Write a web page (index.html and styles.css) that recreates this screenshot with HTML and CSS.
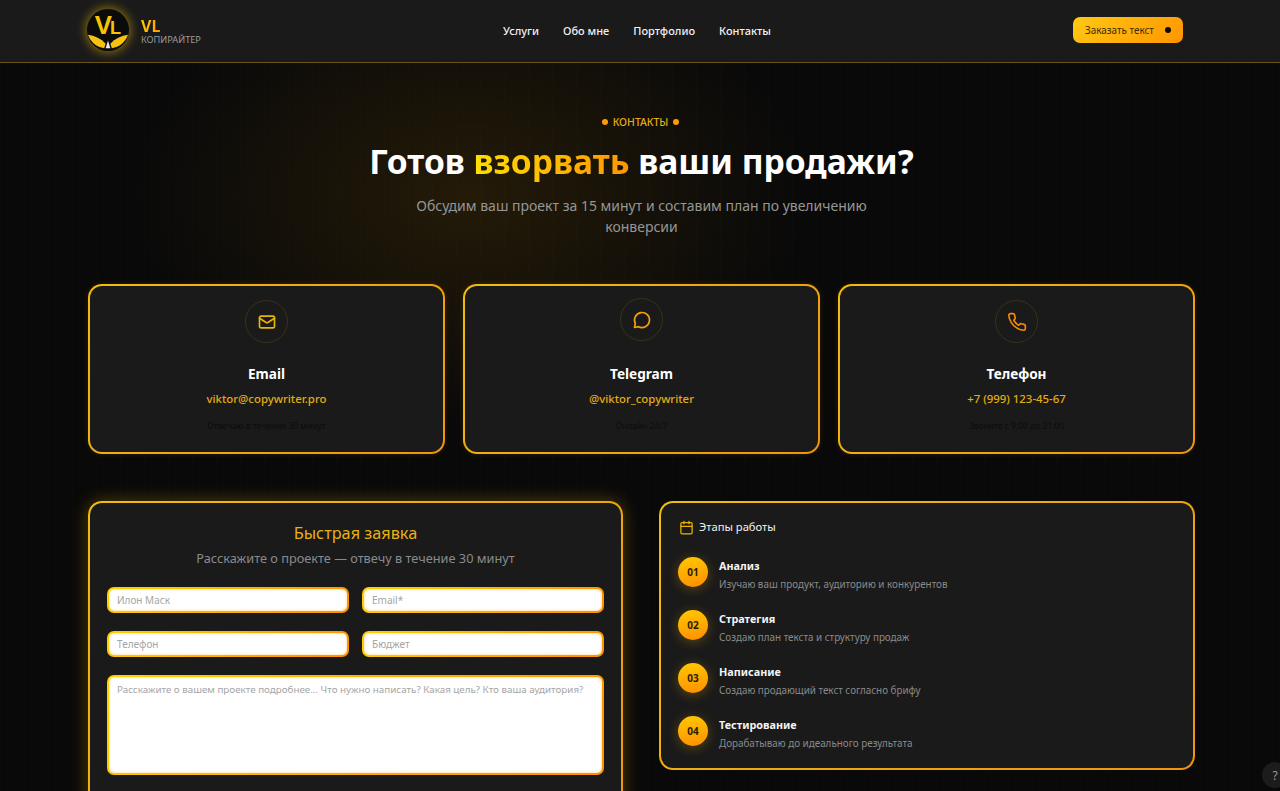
FILE: index.html
```html
<!DOCTYPE html>
<html lang="ru">
<head>
    <meta charset="UTF-8">
    <meta name="viewport" content="width=device-width, initial-scale=1.0">
    <title>VL Копирайтер - Контакты</title>
    <link rel="stylesheet" href="styles.css">
</head>
<body>
    <header class="header">
        <a class="logo" href="#">
            <svg class="logo-mark" viewBox="0 0 44 44" width="42" height="42">
                <circle cx="22" cy="22" r="22" fill="#0b0b0b"/>
                <text class="logo-letters" x="21" y="26" text-anchor="middle">V<tspan class="logo-l">L</tspan></text>
                <path d="M1 27C8 28 15 31 19.5 36.500L18 41C10 40 4 35 1 27z" fill="#f5c211"/>
                <path d="M43 27C36 28 29 31 24.500 36.500L26 41C34 40 40 35 43 27z" fill="#f5c211"/>
                <path d="M22 33l2.500 8h-5z" fill="#e8e8e8"/>
            </svg>
            <span class="logo-text">
                <span class="logo-name">VL</span>
                <span class="logo-role">КОПИРАЙТЕР</span>
            </span>
        </a>
        <nav class="nav">
            <a href="#">Услуги</a>
            <a href="#">Обо мне</a>
            <a href="#">Портфолио</a>
            <a href="#">Контакты</a>
        </nav>
        <a class="order-btn" href="#">Заказать текст <span class="order-dot"></span></a>
    </header>

    <main class="main">
        <section class="hero">
            <div class="hero-label"><span class="dot"></span>КОНТАКТЫ<span class="dot"></span></div>
            <h1>Готов <span class="accent">взорвать</span> ваши продажи?</h1>
            <p>Обсудим ваш проект за 15 минут и составим план по увеличению конверсии</p>
        </section>

        <section class="contact-grid">
            <div class="contact-card">
                <div class="contact-icon">
                    <svg viewBox="0 0 24 24" width="20" height="20" fill="none" stroke="#eab308" stroke-width="2" stroke-linecap="round" stroke-linejoin="round">
                        <rect x="3" y="5" width="18" height="14" rx="2"/>
                        <path d="M21 7.5l-7.970 5.070a2 2 0 0 1-2.060 0L3 7.500"/>
                    </svg>
                </div>
                <h3>Email</h3>
                <a href="#">viktor@copywriter.pro</a>
                <small>Отвечаю в течение 30 минут</small>
            </div>
            <div class="contact-card">
                <div class="contact-icon contact-icon-raised">
                    <svg viewBox="0 0 24 24" width="20" height="20" fill="none" stroke="#f59e0b" stroke-width="2" stroke-linecap="round" stroke-linejoin="round">
                        <path d="M7.900 20A9 9 0 1 0 4 16.100L3 21z"/>
                    </svg>
                </div>
                <h3>Telegram</h3>
                <a href="#">@viktor_copywriter</a>
                <small>Онлайн 24/7</small>
            </div>
            <div class="contact-card">
                <div class="contact-icon">
                    <svg viewBox="0 0 24 24" width="20" height="20" fill="none" stroke="#f08a0c" stroke-width="2" stroke-linecap="round" stroke-linejoin="round">
                        <path d="M22 16.900v3a2 2 0 0 1-2.200 2 19.800 19.800 0 0 1-8.600-3.100 19.500 19.500 0 0 1-6-6A19.800 19.800 0 0 1 2.100 4.200 2 2 0 0 1 4.100 2h3a2 2 0 0 1 2 1.700c.1 1 .4 1.900.7 2.800a2 2 0 0 1-.5 2.100L8.100 9.900a16 16 0 0 0 6 6l1.300-1.300a2 2 0 0 1 2.100-.4c.9.3 1.800.6 2.800.7a2 2 0 0 1 1.700 2z"/>
                    </svg>
                </div>
                <h3>Телефон</h3>
                <a href="#">+7 (999) 123-45-67</a>
                <small>Звоните с 9:00 до 21:00</small>
            </div>
        </section>

        <section class="lower-grid">
            <form class="request-card">
                <h2>Быстрая заявка</h2>
                <p>Расскажите о проекте — отвечу в течение 30 минут</p>
                <div class="form-grid">
                    <input type="text" placeholder="Илон Маск">
                    <input type="email" placeholder="Email*">
                    <input type="tel" placeholder="Телефон">
                    <input type="text" placeholder="Бюджет">
                    <textarea placeholder="Расскажите о вашем проекте подробнее... Что нужно написать? Какая цель? Кто ваша аудитория?"></textarea>
                </div>
            </form>

            <div class="steps-card">
                <h4>
                    <svg viewBox="0 0 24 24" width="15" height="15" fill="none" stroke="#eab308" stroke-width="2" stroke-linecap="round" stroke-linejoin="round">
                        <path d="M8 2v4M16 2v4"/>
                        <rect x="3" y="4" width="18" height="18" rx="2"/>
                        <path d="M3 10h18"/>
                    </svg>
                    Этапы работы
                </h4>
                <ul class="steps">
                    <li>
                        <span class="step-num">01</span>
                        <div class="step-body"><strong>Анализ</strong><span>Изучаю ваш продукт, аудиторию и конкурентов</span></div>
                    </li>
                    <li>
                        <span class="step-num">02</span>
                        <div class="step-body"><strong>Стратегия</strong><span>Создаю план текста и структуру продаж</span></div>
                    </li>
                    <li>
                        <span class="step-num">03</span>
                        <div class="step-body"><strong>Написание</strong><span>Создаю продающий текст согласно брифу</span></div>
                    </li>
                    <li>
                        <span class="step-num">04</span>
                        <div class="step-body"><strong>Тестирование</strong><span>Дорабатываю до идеального результата</span></div>
                    </li>
                </ul>
            </div>
        </section>
    </main>

    <button class="help-btn">?</button>
</body>
</html>
```

FILE: styles.css
```css
* {
    box-sizing: border-box;
}

html, body {
    height: 791px;
    overflow: hidden;
}

body {
    margin: 0;
    color: #fff;
    font-family: "Noto Sans", "Open Sans", sans-serif;
    background-color: #090909;
    background-image:
        radial-gradient(ellipse 340px 230px at 470px 195px, rgba(255, 170, 0, 0.11), transparent),
        repeating-linear-gradient(90deg, rgba(255, 200, 60, 0.012) 0 1px, transparent 1px 24px);
}

a {
    color: inherit;
    text-decoration: none;
}

.header {
    display: flex;
    align-items: center;
    justify-content: space-between;
    height: 63px;
    padding: 0 97px 2px 87px;
    background: #1a1a1a;
    border-bottom: 1px solid #6a5518;
}

.logo {
    display: flex;
    align-items: center;
    gap: 12px;
}

.logo-mark {
    border-radius: 50%;
    box-shadow: 0 0 10px 2px rgba(255, 200, 0, 0.45);
}

.logo-letters {
    font-family: "Liberation Sans", sans-serif;
    font-size: 27px;
    font-weight: 700;
    letter-spacing: -2px;
    fill: #f7c600;
}

.logo-l {
    font-size: 19px;
}

.logo-text {
    display: flex;
    flex-direction: column;
    padding-top: 4px;
}

.logo-name {
    font-size: 16px;
    font-weight: 700;
    line-height: 16px;
    background: linear-gradient(90deg, #ffd000, #ff9800);
    background-clip: text;
    -webkit-background-clip: text;
    color: transparent;
    width: fit-content;
}

.logo-role {
    font-size: 9.2px;
    line-height: 12px;
    color: #9a9a9a;
}

.nav {
    display: flex;
    gap: 24px;
    font-size: 11px;
    font-weight: 500;
    color: #f2f2f2;
}

.order-btn {
    display: flex;
    align-items: center;
    justify-content: space-between;
    width: 110px;
    height: 26px;
    padding: 0 12px;
    border-radius: 7px;
    font-size: 9.9px;
    color: #3b2b05;
    background: linear-gradient(135deg, #ffc914, #ff9500);
}

.order-dot {
    width: 6px;
    height: 6px;
    border-radius: 50%;
    background: #0a0a0a;
}

.main {
    padding: 0 85px 0 88px;
}

.hero {
    text-align: center;
    padding-top: 52px;
}

.hero-label {
    display: flex;
    align-items: center;
    justify-content: center;
    gap: 5px;
    padding-right: 2px;
    font-size: 10.4px;
    line-height: 14px;
    font-weight: 500;
    color: #e5ac12;
}

.dot {
    width: 6px;
    height: 6px;
    border-radius: 50%;
    background: #ff9d00;
}

.hero h1 {
    margin: 9px 0 0;
    font-size: 33.6px;
    line-height: 46px;
    font-weight: 700;
}

.accent {
    background: linear-gradient(90deg, #ffdf00, #ff9500);
    background-clip: text;
    -webkit-background-clip: text;
    color: transparent;
}

.hero p {
    width: 500px;
    margin: 11px auto 0;
    font-size: 14px;
    line-height: 21px;
    color: #969696;
}

.contact-grid {
    display: grid;
    grid-template-columns: repeat(3, 1fr);
    gap: 18px;
    margin-top: 47px;
}

.contact-card,
.request-card,
.steps-card {
    border: 2px solid transparent;
    border-radius: 14px;
    background:
        linear-gradient(#1a1a1a, #1a1a1a) padding-box,
        linear-gradient(135deg, #f0bd10, #ef950a) border-box;
}

.contact-card {
    display: flex;
    flex-direction: column;
    align-items: center;
    height: 170px;
    padding-top: 14px;
    box-shadow: 0 0 6px rgba(255, 170, 0, 0.12);
}

.contact-icon {
    display: flex;
    align-items: center;
    justify-content: center;
    width: 43px;
    height: 43px;
    border: 1px solid #3b3115;
    border-radius: 50%;
}

.contact-icon-raised {
    transform: translateY(-2px);
}

.contact-card h3 {
    margin: 19px 0 0;
    font-size: 13.6px;
    line-height: 24px;
    font-weight: 700;
}

.contact-card a {
    margin-top: 3px;
    font-size: 11.4px;
    line-height: 20px;
    font-weight: 500;
    color: #e5ac12;
}

.contact-card small {
    margin-top: 10px;
    font-size: 8.5px;
    line-height: 14px;
    color: #0c0c0c;
}

.lower-grid {
    display: grid;
    grid-template-columns: 535px 536px;
    align-items: start;
    gap: 36px;
    margin-top: 47px;
}

.request-card {
    height: 340px;
    padding: 17px;
    text-align: center;
    box-shadow: 0 0 18px rgba(255, 190, 0, 0.3);
}

.request-card h2 {
    margin: 1px 0 0;
    font-size: 16.3px;
    line-height: 24px;
    font-weight: 400;
    color: #e8b012;
}

.request-card p {
    margin: 3px 0 0;
    font-size: 12.75px;
    line-height: 20px;
    color: #8a8a8a;
}

.form-grid {
    display: grid;
    grid-template-columns: 242px 242px;
    justify-content: space-between;
    gap: 18px 13px;
    margin-top: 19px;
}

.form-grid input,
.form-grid textarea {
    display: block;
    width: 100%;
    padding: 0 8px;
    border: 2px solid transparent;
    border-radius: 7px;
    outline: none;
    font-family: inherit;
    font-size: 10px;
    color: #333;
    background:
        linear-gradient(#fff, #fff) padding-box,
        linear-gradient(135deg, #ffd000, #ff9000) border-box;
    box-shadow: inset 0 0 3px rgba(255, 170, 0, 0.55);
}

.form-grid input {
    height: 26px;
}

.form-grid textarea {
    grid-column: 1 / -1;
    height: 100px;
    padding-top: 6px;
    font-size: 9.8px;
    resize: none;
}

.form-grid input::placeholder,
.form-grid textarea::placeholder {
    color: #a5a5a5;
}

.steps-card {
    height: 269px;
    padding: 14px 18px;
}

.steps-card h4 {
    display: flex;
    align-items: center;
    gap: 5px;
    margin: 0;
    font-size: 11.2px;
    line-height: 20px;
    font-weight: 400;
    color: #f2f2f2;
}

.steps {
    display: flex;
    flex-direction: column;
    gap: 17px;
    margin: 20px 0 0;
    padding: 0;
    list-style: none;
}

.steps li {
    display: flex;
    align-items: flex-start;
    gap: 11px;
}

.step-num {
    display: flex;
    align-items: center;
    justify-content: center;
    flex: none;
    width: 30px;
    height: 30px;
    margin-left: -1px;
    border-radius: 50%;
    font-size: 10px;
    font-weight: 700;
    color: #2a1c00;
    background: linear-gradient(170deg, #ffc800, #ff8f00);
    box-shadow: 0 2px 12px rgba(255, 180, 0, 0.3);
}

.step-body strong {
    display: block;
    font-size: 10.8px;
    line-height: 18px;
    font-weight: 700;
    color: #f4f4f4;
}

.step-body span {
    display: block;
    font-size: 9.85px;
    line-height: 18px;
    color: #8a8a8a;
}

.help-btn {
    position: fixed;
    right: -8px;
    bottom: 3px;
    width: 26px;
    height: 26px;
    padding: 0;
    border: none;
    border-radius: 50%;
    font-family: inherit;
    font-size: 12px;
    color: #9a9a9a;
    background: #1c1c1c;
}
```
